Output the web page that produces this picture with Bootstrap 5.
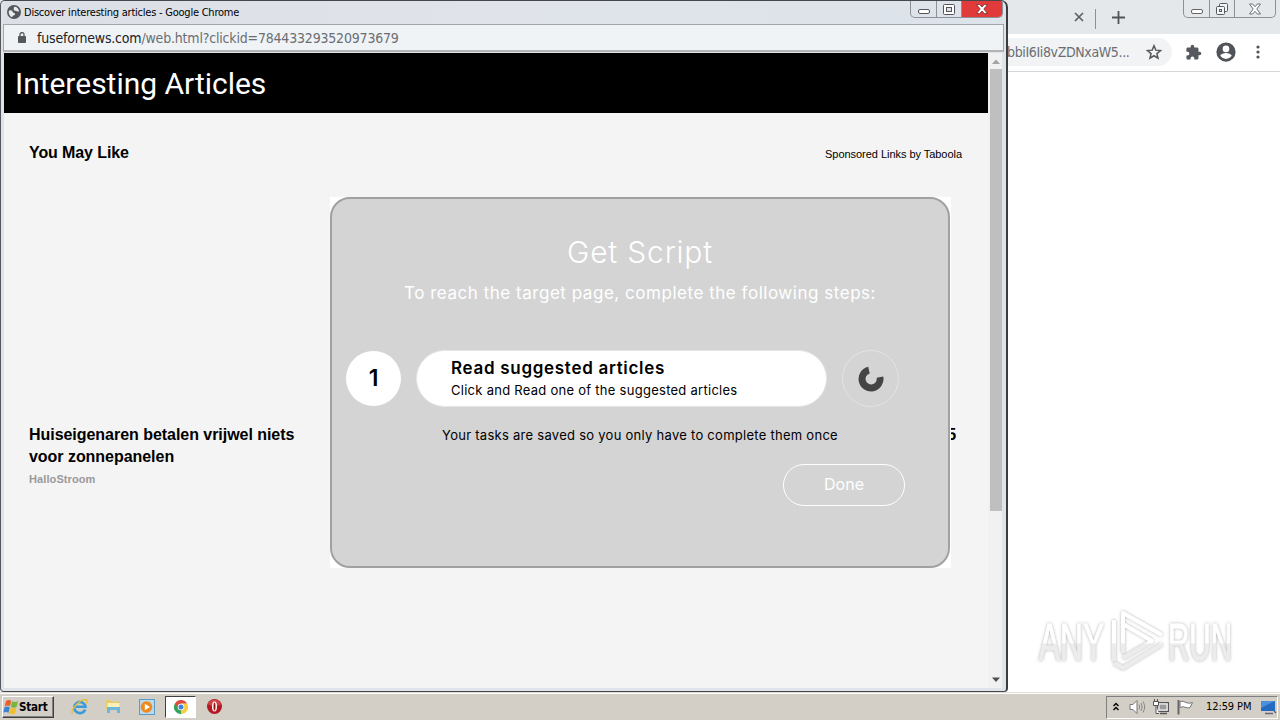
<!DOCTYPE html>
<html lang="en">
<head>
<meta charset="utf-8">
<title>Discover interesting articles</title>
<link href="https://cdn.jsdelivr.net/npm/bootstrap@5.3.0/dist/css/bootstrap.min.css" rel="stylesheet">
<style>
body{width:1280px;height:720px;overflow:hidden;background:#fff;font-family:"Liberation Sans",sans-serif;color:#000}
svg{display:block;flex:none}
.tahoma{font-family:"DejaVu Sans Condensed","DejaVu Sans",sans-serif}
.pop{font-family:Inter,Lato,sans-serif}
.nw{white-space:nowrap}
/* background browser */
.back-tabs{height:34px;background:#e4e8eb}
.back-bar{height:38px;border-bottom:1px solid #d4d7da}
.back-url{height:28px;margin-top:4px;width:172px;background:#f1f3f4;border-radius:0 14px 14px 0;font-size:14px;color:#6a6e73}
.ctl{height:18px;border:1px solid #8d9197;border-top:0;border-radius:0 0 5px 5px}
.ctl>*+*{border-left:1px solid #8d9197}
.sep{width:1px;height:20px;background:#8c9094;margin:3px 16px 0 11px}
/* front window */
.win{left:0;top:0;width:1008px;height:692px;background:#dfe3ea;border:1px solid #45474c;border-left:1px solid #55575c;border-right:2px solid #3a3c40;border-radius:5px 7px 4px 4px;overflow:hidden;padding:0 3px 3px 2px}
.titlebar{height:23px;background:linear-gradient(90deg,#dcdfe6,#e0e3ea 50%,#dde3ea)}
.title-txt{font-size:11px;line-height:23px;letter-spacing:-.23px}
.addr{height:28px;margin-right:-1px;background:#eff3f6;border:1px solid #a3a7aa;border-bottom-width:2px;border-bottom-color:#b4b4b4;font-size:14px;color:#6a6e73}
.addr b{font-weight:400;color:#202124}
.page{height:635px;background:#f4f4f4;margin-left:1px;margin-right:1px}
.hero{height:60px;font:400 30px/62px Roboto,sans-serif;padding-left:11px;letter-spacing:-.02px}
.scroller{width:14px;background:#f1f1f1}
.thumb{height:442px;margin:0 0 0 2px;background:#bfbfbf}
.story{font-weight:700;font-size:16px;line-height:22px;letter-spacing:-.04px}
/* dialog */
.dialog-wrap{left:330px;top:197px;width:621px;height:371px;background:#fff}
.dialog-box{width:620px;height:371px;background:#d4d4d4;border:2px solid #a1a1a1;border-radius:20px}
.dlg-title{font-size:30px;line-height:44px;font-weight:300;margin-top:31px;letter-spacing:.8px}
.dlg-sub{font-size:17px;line-height:26px;font-weight:400;margin-top:6px;letter-spacing:.53px}
.steps{margin:44px 0 0 14px}
.num{width:55px;height:55px;font-size:23px;font-weight:600}
.pill{width:411px;height:57px;margin:0 15px;padding:6px 0 0 34px;border:1px solid #e6e6e6}
.pill-h{font-size:17px;line-height:23px;font-weight:600;letter-spacing:.7px}
.pill-p{font-size:13px;line-height:21px;letter-spacing:.27px}
.spin{width:57px;height:57px;border:1px solid #e4e4e4}
.note{font-size:13px;line-height:20px;margin-top:18px;letter-spacing:.27px}
.done{width:122px;height:42px;border:1px solid #fff;margin:19px 43px 0 auto;font-size:16px;line-height:39px}
/* taskbar */
.taskbar{left:0;top:692px;width:1280px;height:28px;background:#d4cfc6;border-top:1px solid #e0ddd6;box-shadow:inset 0 1px #fff}
.start{width:52px;height:22px;border:1px solid #fff;border-right-color:#404040;border-bottom-color:#404040;box-shadow:inset -1px -1px #808080;font-size:11.5px;line-height:20px;font-weight:700;letter-spacing:-.2px}
.chrome-btn{width:31px;height:22px;background:#fff;border:1px solid #404040;border-right-color:#fff;border-bottom-color:#fff}
.tray{width:172px;height:23px;border:1px solid #808080;border-right-color:#fff;border-bottom-color:#fff}
.clock{font-size:11px;letter-spacing:-.1px}
.mark-logo{left:1030px;top:602px}
</style>
</head>
<body class="position-relative">
<div class="back-tabs d-flex justify-content-end">
  <div class="d-flex align-items-center" style="height:34px">
    <svg width="10" height="10" viewBox="0 0 10 10"><path d="M1 1l8 8M9 1l-8 8" stroke="#5c6064" stroke-width="1.700"/></svg>
    <div class="sep"></div>
    <svg width="13" height="13" viewBox="0 0 13 13"><path d="M6.500 0v13M0 6.500h13" stroke="#505458" stroke-width="1.800"/></svg>
  </div>
  <div class="ctl d-flex me-1" style="width:93px;margin-left:58px">
    <div class="d-flex align-items-center justify-content-center" style="width:25px"><svg width="12" height="12"><rect x=".5" y="6.500" width="11" height="4" rx="1.500" fill="#fff" stroke="#666"/></svg></div>
    <div class="d-flex align-items-center justify-content-center" style="width:25px"><svg width="14" height="14"><g fill="#f4f5f6" stroke="#55595d"><rect x="4.500" y="1.500" width="8" height="8" rx="1"/><rect x="1.500" y="4.500" width="8" height="8" rx="1"/><rect x="4.500" y="7.500" width="2" height="2"/></g></svg></div>
    <div class="d-flex align-items-center justify-content-center flex-fill"><svg width="12" height="12"><path d="M.5 1h3.200L6 3.700 8.300 1h3.200L7.800 6l3.700 5H8.300L6 8.300 3.700 11H.5L4.200 6z" fill="#fff" stroke="#6c7074"/></svg></div>
  </div>
</div>
<div class="back-bar d-flex" style="padding-left:1000px">
  <div class="back-url tahoma d-flex align-items-center justify-content-between nw"><span style="letter-spacing:-.36px;font-weight:200;margin-left:7px">bbiI6Ii8vZDNxaW5...</span>
    <svg style="margin-right:9px" width="18" height="18" viewBox="0 0 24 24"><path d="M12 3.600l2.400 5.900 6.300.5-4.800 4.100 1.500 6.200L12 17l-5.400 3.300 1.500-6.200L3.300 10l6.300-.5z" fill="none" stroke="#55595d" stroke-width="2"/></svg></div>
  <div class="d-flex align-items-center" style="height:36px;padding-left:13px">
    <svg width="17" height="17" viewBox="0 0 24 24"><path fill="#55595d" d="M20.500 11H19V7c0-1.100-.9-2-2-2h-4V3.500a2.500 2.500 0 0 0-5 0V5H4c-1.100 0-2 .9-2 2v3.800h1.500a2.700 2.700 0 0 1 0 5.400H2V20c0 1.100.9 2 2 2h3.800v-1.500a2.700 2.700 0 0 1 5.400 0V22H17c1.100 0 2-.9 2-2v-4h1.500a2.500 2.500 0 0 0 0-5z"/></svg>
    <svg style="margin-left:13px" width="22" height="22" viewBox="0 0 24 24"><path fill="#505458" d="M12 1.500a10.500 10.500 0 1 0 0 21 10.500 10.500 0 0 0 0-21zm0 3.500a3.600 3.600 0 1 1 0 7.200A3.600 3.600 0 0 1 12 5zm0 14.500a7.500 7.500 0 0 1-6.200-3.300c0-2 4.200-3.200 6.200-3.200s6.200 1.200 6.200 3.200a7.500 7.500 0 0 1-6.200 3.300z"/></svg>
    <svg style="margin-left:19px" width="4" height="14"><g fill="#505458"><circle cx="2" cy="2" r="1.600"/><circle cx="2" cy="7" r="1.600"/><circle cx="2" cy="12" r="1.600"/></g></svg>
  </div>
</div>

<main class="win position-absolute">
  <div class="titlebar d-flex">
    <svg class="ms-1" style="margin-top:4px" width="14" height="14" viewBox="0 0 14 14"><circle cx="7" cy="7" r="7" fill="#54585c"/><path d="M2 5.500q2.500-1 3.500 1t2.300 1.700q1 1.800-1.600 2.300L5 12.300q-3-1.300-3.300-5zM7 2q2.300-.6 4 1.500l1.200 2.700q-2 .8-3.200-.4-2.500.2-2.300-1.600z" fill="#e8eaed"/></svg>
    <span class="title-txt tahoma nw" style="margin-left:3px">Discover interesting articles - Google Chrome</span>
    <div class="ctl d-flex ms-auto" style="width:93px;height:17px">
      <div class="d-flex align-items-center justify-content-center" style="width:25px"><svg width="12" height="12"><rect x=".5" y="6.500" width="11" height="4" rx="1.500" fill="#fff" stroke="#555"/></svg></div>
      <div class="d-flex align-items-center justify-content-center" style="width:25px"><svg width="12" height="11"><rect x=".5" y=".5" width="11" height="10" rx="1" fill="#fff" stroke="#555"/><rect x="3.500" y="3.500" width="5" height="4" fill="#dde" stroke="#555"/></svg></div>
      <div class="d-flex align-items-center justify-content-center flex-fill" style="background:#e03a3a;border-radius:0 0 4px 0"><svg width="12" height="12"><path d="M.5 1.500h3.200L6 4l2.300-2.500h3.200L7.800 6l3.700 4.500H8.300L6 8l-2.300 2.500H.5L4.200 6z" fill="#fff" stroke="#703030" stroke-width=".8"/></svg></div>
    </div>
  </div>
  <div class="addr tahoma d-flex align-items-center nw">
    <svg style="margin-left:14px" width="8" height="11" viewBox="0 0 8 11"><rect y="4" width="8" height="7" rx=".8" fill="#55595d"/><path d="M2 4.500V2.600a2 2 0 0 1 4 0v1.900" fill="none" stroke="#55595d" stroke-width="1.300"/></svg>
    <span style="margin:2px 0 0 11px;letter-spacing:-.19px;font-weight:200"><b style="font-weight:200">fusefornews.com</b>/web.html?clickid=784433293520973679</span>
  </div>
  <div class="page d-flex" style="margin-top:1px">
    <div class="flex-fill">
      <div class="hero bg-black text-white">Interesting Articles</div>
      <div class="d-flex justify-content-between" style="padding:28px 26px 0 25px">
        <strong style="font-size:16px;line-height:23px;letter-spacing:-.1px">You May Like</strong>
        <span style="font-size:11px;line-height:27px;letter-spacing:-.04px">Sponsored Links by Taboola</span>
      </div>
      <div class="d-flex justify-content-between" style="padding:256px 32px 0 25px">
        <div>
          <div class="story" style="width:272px">Huiseigenaren betalen vrijwel niets voor zonnepanelen</div>
          <div class="fw-bold" style="font-size:11px;line-height:23px;letter-spacing:.1px;color:#999">HalloStroom</div>
        </div>
        <div class="story">5</div>
      </div>
    </div>
    <div class="scroller d-flex flex-column">
      <svg width="14" height="16"><path d="M4 11l4-4.500L12 11z" fill="#a3a3a3"/></svg>
      <div class="thumb"></div>
      <svg class="mt-auto" width="14" height="16"><path d="M4 5.500h8L8 10z" fill="#505050"/></svg>
    </div>
  </div>
</main>

<section class="dialog-wrap position-absolute pop">
  <div class="dialog-box nw">
    <div class="dlg-title text-white text-center">Get Script</div>
    <div class="dlg-sub text-white text-center">To reach the target page, complete the following steps:</div>
    <div class="steps d-flex align-items-center">
      <div class="num bg-white rounded-circle d-flex align-items-center justify-content-center">1</div>
      <div class="pill bg-white rounded-pill"><div class="pill-h">Read suggested articles</div><div class="pill-p">Click and Read one of the suggested articles</div></div>
      <div class="spin rounded-circle d-flex align-items-center justify-content-center"><svg width="26" height="26" viewBox="0 0 26 26"><path d="M10.200 .8A12.500 12.500 0 1 0 25.300 10.500L18.700 11.800A5.600 5.600 0 1 1 11.700 7.400Z" fill="#444"/></svg></div>
    </div>
    <div class="note text-center">Your tasks are saved so you only have to complete them once</div>
    <div class="done text-white text-center rounded-pill">Done</div>
  </div>
</section>

<svg class="mark-logo position-absolute" width="210" height="76" viewBox="0 0 210 76">
  <defs>
    <filter id="sh" x="-10%" y="-10%" width="120%" height="120%"><feDropShadow dx="0" dy="0" stdDeviation="1.500" flood-color="#777" flood-opacity=".6"/></filter>
    <linearGradient id="g" x1="0" y1="0" x2="0" y2="76" gradientUnits="userSpaceOnUse"><stop offset=".54" stop-color="#fff"/><stop offset=".55" stop-color="#ececec"/></linearGradient>
    <linearGradient id="gt" x1="0" y1="-58" x2="0" y2="18" gradientUnits="userSpaceOnUse"><stop offset=".54" stop-color="#fff"/><stop offset=".55" stop-color="#ececec"/></linearGradient>
  </defs>
  <g filter="url(#sh)" fill="url(#gt)" stroke="url(#gt)" font-family="Liberation Sans, sans-serif" font-size="51">
    <text transform="translate(9 58) scale(.62 1)">ANY</text>
    <text transform="translate(138 58) scale(.58 1)">RUN</text>
    <g fill="none" stroke="url(#g)" stroke-width="4" stroke-linejoin="round">
      <path d="M93 51V11L132 33M132 42L93 66l-9-5M84 18V59M93 22l29 17-29 17"/>
    </g>
  </g>
</svg>

<footer class="taskbar position-absolute d-flex align-items-center tahoma">
  <div class="start d-flex align-items-center nw" style="margin-left:2px">
    <svg width="16" height="16" viewBox="0 0 16 16"><path d="M3 2q2.700-1.800 5.200-.2L7 7.300q-2.500-1.500-5.300 0z" fill="#e8602c"/><path d="M9 2.300q3 1.500 6 0L13.600 8q-2.800 1.500-5.800 0z" fill="#79b43c"/><path d="M1.500 8.200q2.700-1.500 5.300 0l-1.200 5.600q-2.500-1.500-5.300 0z" fill="#3c82cf"/><path d="M7.600 8.800q3 1.500 5.700 0l-1.200 5.600q-2.800 1.500-5.700 0z" fill="#f2bd2c"/></svg><span style="margin-top:1px">Start</span>
  </div>
  <svg style="margin-left:17px" width="17" height="17" viewBox="0 0 17 17"><path d="M14.200 11.500A5.600 5.600 0 1 1 14.500 8.800H5" fill="none" stroke="#3b9bd9" stroke-width="2.600"/><path d="M1.500 15.500C-1 12 9 1 15 1.500c2 .5 1 3-.5 4.500" fill="none" stroke="#e5bd3a" stroke-width="1.300"/></svg>
  <svg style="margin-left:17px" width="17" height="17" viewBox="0 0 17 17"><path d="M1 2h5l1 1.500h8V12H1z" fill="#e8cc69"/><path d="M2.500 5h12v5h-12z" fill="#fbf1b8"/><path d="M2 15V9h13v6h-3v-3H5v3z" fill="#6eb7dc"/></svg>
  <svg style="margin-left:17px" width="16" height="16" viewBox="0 0 16 16"><rect x=".5" y=".5" width="15" height="15" fill="#b9d9ee" stroke="#5b9cc6"/><circle cx="7.500" cy="8" r="5.800" fill="#ef8a1d"/><path d="M5.800 4.800L11 8l-5.200 3.200z" fill="#fff"/></svg>
  <div class="chrome-btn d-flex align-items-center justify-content-center" style="margin-left:10px"><svg width="14" height="14" viewBox="0 0 14 14"><path d="M7 7L.9 3.500A7 7 0 0 0 7 14z" fill="#36a15a"/><path d="M7 7L7 14A7 7 0 0 0 13.100 3.500H7z" fill="#f8cd3b"/><path d="M.9 3.500A7 7 0 0 1 13.100 3.500H7L4 8z" fill="#dd4b3e"/><circle cx="7" cy="7" r="3.300" fill="#fff"/><circle cx="7" cy="7" r="2.500" fill="#437fe0"/></svg></div>
  <svg style="margin-left:11px" width="15" height="15" viewBox="0 0 15 15"><circle cx="7.500" cy="7.500" r="7.500" fill="#b21a20"/><path d="M1 5.500a6.800 6.800 0 0 1 13 0q-6.500 3-13 0" fill="#e4686a" opacity=".55"/><ellipse cx="7.500" cy="7.500" rx="2.500" ry="5" fill="#fff"/><ellipse cx="7.500" cy="7.500" rx="1" ry="4" fill="#a01015"/></svg>
  <div class="tray d-flex align-items-center ms-auto nw" style="margin-right:2px;margin-top:1px">
    <svg style="margin-left:6px" width="6" height="10"><path d="M.5 4L3 1.500 5.500 4M.5 8L3 5.500 5.500 8" fill="none" stroke="#000" stroke-width="1.400"/></svg>
    <svg style="margin-left:10px" width="17" height="16" viewBox="0 0 17 16"><path d="M1 5.500h3L8 1.500v13L4 10.500H1z" fill="#fff" stroke="#777"/><path d="M10 5.500q1.500 2.500 0 5M12 4q2.500 4 0 8M14 2.500q3.300 5.500 0 11" fill="none" stroke="#888"/></svg>
    <svg style="margin-left:7px" width="16" height="16" viewBox="0 0 16 16"><rect x="4.500" y="3.500" width="11" height="9" fill="#aaa" stroke="#555"/><rect x="6" y="5" width="8" height="6" fill="#999" stroke="#fff"/><path d="M7 14.500h7" stroke="#555" stroke-width="1.500"/><path d="M.5 2.500h5v4h-5zM1.500 0v2M4.500 0v2M3 6.500v8h3" fill="#fff" stroke="#555"/></svg>
    <svg style="margin-left:8px" width="17" height="16" viewBox="0 0 17 16"><path d="M1.500 1v14.500" stroke="#666" stroke-width="2"/><path d="M3 2.500q3-1 6 1 3 1.500 6.500 0l-2.500 5q-2 1-4 0-3-1.500-6 0z" fill="#fff" stroke="#777"/></svg>
    <span class="clock" style="margin:1px 0 0 12px">12:59 PM</span>
    <svg class="ms-auto" width="17" height="15" viewBox="0 0 17 15"><path d="M1 1h14v10H1z" fill="#246ac0"/><path d="M1 1h14L1 8z" fill="#4a90dc"/><path d="M5 13.500h8M14 11l2 2" stroke="#667" stroke-width="1.500"/></svg>
  </div>
</footer>
<script src="https://cdn.jsdelivr.net/npm/bootstrap@5.3.0/dist/js/bootstrap.bundle.min.js"></script>
</body>
</html>
